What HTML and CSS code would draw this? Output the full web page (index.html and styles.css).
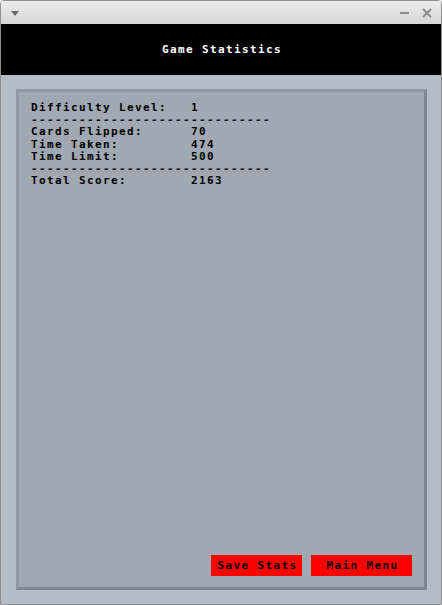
FILE: index.html
```html
<!DOCTYPE html>
<html>
<head>
<meta charset="utf-8">
<link rel="stylesheet" href="styles.css">
</head>
<body>
<div class="window">
  <div class="titlebar">
    <svg class="menu-icon" width="8" height="5" viewBox="0 0 8 5"><polygon points="0,0 8,0 4,5" fill="#6a6a6a"/></svg>
    <div class="controls">
      <svg width="10" height="10" viewBox="0 0 10 10"><rect x="0" y="4" width="9" height="2" fill="#8a8a8a"/></svg>
      <svg width="10" height="10" viewBox="0 0 10 10"><path d="M1 1 L9 9 M9 1 L1 9" stroke="#8a8a8a" stroke-width="2"/></svg>
    </div>
  </div>
  <div class="header">Game Statistics</div>
  <div class="content">
    <div class="panel">
      <pre class="stats">Difficulty Level:   1
------------------------------
Cards Flipped:      70
Time Taken:         474
Time Limit:         500
------------------------------
Total Score:        2163</pre>
      <div class="buttons">
        <div class="btn btn-save">Save Stats</div>
        <div class="btn btn-menu">Main Menu</div>
      </div>
    </div>
  </div>
</div>
</body>
</html>
```
FILE: styles.css
```css
html, body {
  margin: 0;
  padding: 0;
  background: #ffffff;
}
.window {
  width: 440px;
  height: 603px;
  border: 1px solid #8e8e8e;
  border-radius: 4px 4px 0 0;
  display: flex;
  flex-direction: column;
  overflow: hidden;
  font-family: "DejaVu Sans Mono", "Liberation Mono", monospace;
}
.titlebar {
  height: 23px;
  background: linear-gradient(#ececec, #d6d6d6);
  display: flex;
  align-items: center;
  justify-content: space-between;
  padding: 0 9px 0 10px;
  flex-shrink: 0;
}
.menu-icon {
  margin-top: 2px;
}
.controls {
  display: flex;
  gap: 12px;
  align-items: center;
}
.header {
  height: 51px;
  background: #000;
  color: #fff;
  font-weight: bold;
  font-size: 11px;
  letter-spacing: 1.38px;
  display: flex;
  align-items: center;
  justify-content: center;
  flex-shrink: 0;
  padding-left: 2px;
  box-sizing: border-box;
}
.content {
  flex: 1;
  background: #b3bdc7;
  padding: 14px 14px 14px 15px;
  display: flex;
}
.panel {
  flex: 1;
  background: #a0a9b3;
  border: 3px solid;
  border-color: #8f99a3 #7f8790 #7f8790 #8f99a3;
  display: flex;
  flex-direction: column;
  padding: 10px 12px 11px 12px;
}
.stats {
  margin: 0;
  font-family: "DejaVu Sans Mono", "Liberation Mono", monospace;
  font-weight: bold;
  font-size: 11px;
  letter-spacing: 1.38px;
  line-height: 12.2px;
  color: #000;
}
.buttons {
  margin-top: auto;
  display: flex;
  justify-content: flex-end;
  gap: 9px;
}
.btn {
  height: 21px;
  background: #ff0000;
  color: #000;
  font-weight: bold;
  font-size: 11px;
  letter-spacing: 1.38px;
  display: flex;
  align-items: center;
  justify-content: center;
  padding-left: 2px;
  box-sizing: border-box;
}
.btn-save { width: 91px; }
.btn-menu { width: 101px; }
```
